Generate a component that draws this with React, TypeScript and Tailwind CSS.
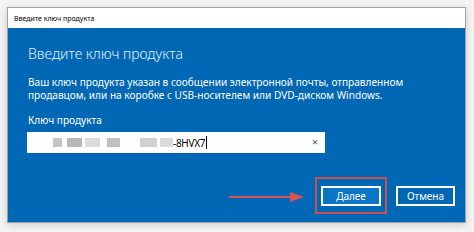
import React from "react";

export default function App() {
  const font = { fontFamily: '"Noto Sans", "Open Sans", sans-serif' };
  return (
    <div className="w-[474px] h-[232px] bg-[#f4f4f4] pt-[7px] pl-[7px]" style={font}>
      <div className="w-[459px] h-[216px] flex flex-col border border-[#a0a0a0] shadow-[0_2px_8px_rgba(0,0,0,0.16)]">
        <div className="h-[20px] bg-white flex items-center pl-[6px] text-[7px] text-black leading-none">
          Введите ключ продукта
        </div>
        <div className="flex-1 bg-[#0067b4] flex flex-col pl-[20px] pr-[10px] pb-[8px]">
          <div className="mt-[16px] text-[14px] font-light text-[#e6f2ff] leading-[20px]">
            Введите ключ продукта
          </div>
          <div className="mt-[12px] text-[10.1px] leading-[13px] text-white">
            Ваш ключ продукта указан в сообщении электронной почты, отправленном
            <br />
            продавцом, или на коробке с USB-носителем или DVD-диском Windows.
          </div>
          <div className="mt-[12px] text-[10.1px] leading-[13px] text-white">Ключ продукта</div>
          <div className="mt-[5px] -ml-px w-[298px] h-[21px] bg-white flex items-center relative">
            <div className="flex items-center ml-[26px] blur-[0.7px]">
              <div className="w-[9px] h-[9px] bg-[#c4c4c4]" />
              <div className="w-[15px] h-[9px] bg-[#b8b8b8] ml-[5px]" />
              <div className="w-[15px] h-[9px] bg-[#dcdcdc] ml-[3px]" />
              <div className="w-[13px] h-[9px] bg-[#c0c0c0] ml-[7px]" />
              <div className="w-[17px] h-[9px] bg-[#d0d0d0] ml-[20px]" />
              <div className="w-[13px] h-[9px] bg-[#dadada] ml-[3px]" />
            </div>
            <span className="text-[10px] text-black leading-none tracking-[-0.3px]">-8HVX7</span>
            <div className="w-px h-[13px] bg-black ml-px" />
            <span className="absolute right-[7px] top-[4px] text-[11px] text-[#555] leading-none">×</span>
          </div>
          <div className="flex-1 flex items-end justify-end">
            <div className="flex items-center">
              <div className="flex items-center mr-[11px] mt-[3px]">
                <div className="w-[62px] h-[2px] bg-[#d9534f]" />
                <svg width="14" height="10" viewBox="0 0 14 10" className="-ml-px">
                  <path d="M0 0 L14 5 L0 10 Z" fill="#d9534f" />
                </svg>
              </div>
              <div className="w-[72px] h-[37px] border-2 border-[#c9504d] flex items-center justify-center">
                <div className="w-[60px] h-[20px] border-2 border-white bg-[#0a75c5] flex items-center justify-center text-[10px] text-white leading-none">
                  Далее
                </div>
              </div>
              <div className="ml-[9px] w-[59px] h-[20px] border-2 border-white bg-[#0067b4] flex items-center justify-center text-[10px] text-white leading-none">
                Отмена
              </div>
            </div>
          </div>
        </div>
      </div>
    </div>
  );
}
